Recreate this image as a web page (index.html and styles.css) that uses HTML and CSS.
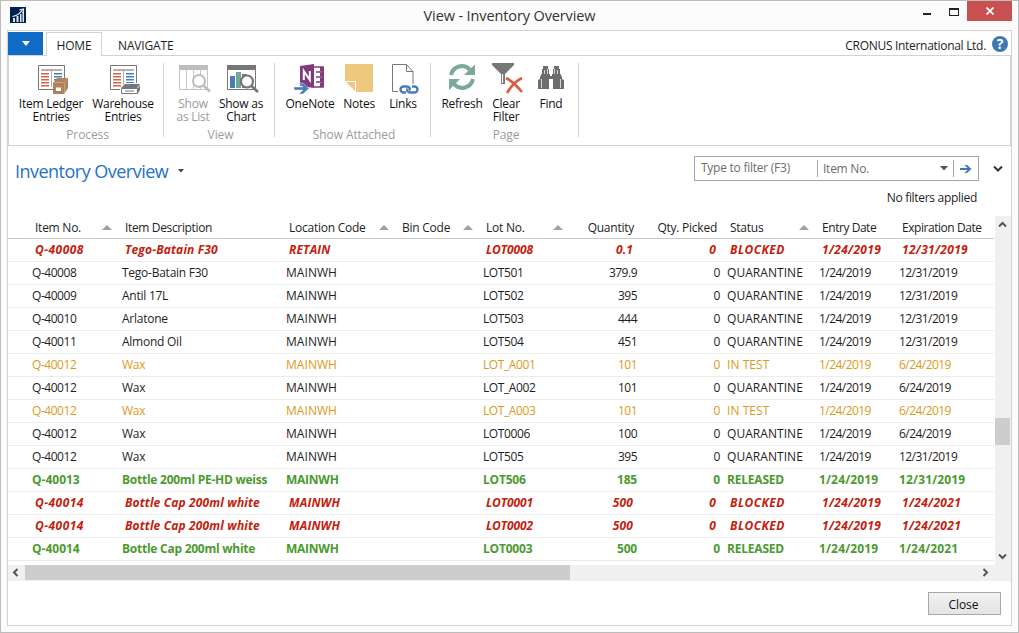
FILE: index.html
```html
<!DOCTYPE html>
<html lang="en">
<head>
<meta charset="utf-8">
<title>View - Inventory Overview</title>
<link rel="stylesheet" href="styles.css">
</head>
<body>
<div class="window">
  <header class="titlebar">
    <svg class="app-icon" width="16" height="16" viewBox="0 0 16 16"><rect width="16" height="16" fill="#00214f"/><path d="M3 11h2v4H3zM6.500 9h2v6h-2zM10 7h1.500v8H10zM12.500 5H14v10h-1.500z" fill="#dfe6ef"/><path d="M2.500 9.500C6 9 9.500 7 12 3.500M9.500 3l4-1-.5 4" fill="none" stroke="#fff" stroke-width="1.200"/></svg>
    <h1 class="window-title">View - Inventory Overview</h1>
    <div class="window-buttons">
      <svg class="minimize" width="8" height="3"><rect width="8" height="2" fill="#222"/></svg>
      <svg class="maximize" width="10" height="8"><path d="M0 0h10v8H0zM1 2v5h8V2z" fill="#222" fill-rule="evenodd"/></svg>
      <div class="window-close"><svg width="8" height="8" viewBox="0 0 8 8"><path d="M.5.5l7 7M7.500.5l-7 7" stroke="#fff" stroke-width="1.700"/></svg></div>
    </div>
  </header>
  <main class="panel">
    <nav class="tabs">
      <div class="app-menu"><svg width="8" height="5"><path d="M0 0h8L4 5z" fill="#fff"/></svg></div>
      <div class="tab tab-active">HOME</div>
      <div class="tab">NAVIGATE</div>
      <div class="company">CRONUS International Ltd.</div>
      <div class="help">?</div>
    </nav>
    <section class="ribbon">
      <div class="group group-process">
        <div class="actions">
          <div class="action"><svg class="icon" viewBox="0 0 32 32"><use href="#report"/><path d="M18 21l4-5h11v10l-4 6H18z" fill="#b18159"/><path d="M18 20.500h11l4-4M29.500 21v11" fill="none" stroke="#d7b898" stroke-width=".6"/><path d="M21 25.500h5v3.500h-5z" fill="#fff"/></svg><span>Item Ledger<br>Entries</span></div>
          <div class="action"><svg class="icon" viewBox="0 0 32 32"><use href="#report"/><path d="M13 27l5-6h16v7l-3 5H13z" fill="#fff"/><path d="M14 26l4-4h15l-3 4zM30.500 26.500l2.500-3.500v5l-2.500 4z" fill="#777"/><path d="M14.500 26.500h16v5h-16zM18 29h9" fill="none" stroke="#777"/></svg><span>Warehouse<br>Entries</span></div>
        </div>
        <div class="group-label">Process</div>
      </div>
      <div class="group group-view">
        <div class="actions">
          <div class="action disabled"><svg class="icon" viewBox="0 0 32 32"><path d="M2 3h29v5H2z" fill="#bdbdbd"/><path d="M2.500 7v20.500h28V7M9.500 8v19M16.500 8v19M23.500 8v19" fill="none" stroke="#c6c6c6"/><circle cx="22" cy="19" r="6" fill="#fff" stroke="#bdbdbd" stroke-width="2"/><path d="M26.500 23.500l6.500 6" stroke="#bdbdbd" stroke-width="2.500"/></svg><span>Show<br>as List</span></div>
          <div class="action"><svg class="icon" viewBox="0 0 32 32"><path d="M2 3h29v5H2z" fill="#777"/><path d="M2.500 7v20.500h28V7" fill="none" stroke="#777"/><path d="M5 14h5v12H5z" fill="#477eb8"/><path d="M11 10h5v16h-5z" fill="#72a796"/><path d="M17 12h5v14h-5z" fill="#777"/><circle cx="22" cy="19.500" r="6" fill="#fff" stroke="#777" stroke-width="2.200"/><path d="M26.500 24l6.500 6" stroke="#777" stroke-width="2.800"/></svg><span>Show as<br>Chart</span></div>
        </div>
        <div class="group-label">View</div>
      </div>
      <div class="group group-attached">
        <div class="actions">
          <div class="action"><svg class="icon" viewBox="0 0 32 32"><path d="M6 4l14-2v24L6 24z" fill="#80397b"/><path d="M20 5h9v20h-9M22 10h8M22 15h8M22 20h8" fill="none" stroke="#80397b" stroke-width="1.600"/><path d="M26 5h4v4h-4zM26 10.500h4v4h-4zM26 16h4v4h-4zM26 21h4v4h-4z" fill="#80397b"/><path d="M9.800 18V9l6 9V9" fill="none" stroke="#fff" stroke-width="2"/><path d="M0 25h9l-4-4h4l6 5.500L9 32H5l4-4H0z" fill="#477eb8" stroke="#fff" stroke-width=".4"/></svg><span>OneNote</span></div>
          <div class="action"><svg class="icon" viewBox="0 0 32 32"><path d="M2 2h28v28H13L2 19z" fill="#eec77e"/><path d="M2 19.500h10.500V30" fill="none" stroke="#fff"/></svg><span>Notes</span></div>
          <div class="action"><svg class="icon" viewBox="0 0 32 32"><path d="M11 29.500H5.500v-27h14l6.500 7V22M19.500 2.500v7H26" fill="none" stroke="#777"/><g fill="none" stroke="#fff" stroke-width="5"><rect x="13.500" y="24.500" width="9" height="6" rx="3"/><rect x="21.500" y="24.500" width="9" height="6" rx="3"/></g><g fill="none" stroke="#477eb8" stroke-width="2.400"><path d="M19 30.500h-2.500a3 3 0 0 1 0-6h3c3 0 4 2 3 4"/><path d="M25 24.500h2.500a3 3 0 0 1 0 6h-4c-3 0-4-2-3-4"/></g></svg><span>Links</span></div>
        </div>
        <div class="group-label">Show Attached</div>
      </div>
      <div class="group group-page">
        <div class="actions">
          <div class="action"><svg class="icon" viewBox="0 0 32 32"><g fill="none" stroke="#7aa999" stroke-width="4"><path d="M5 13c2-9 13-12 19-5"/><path d="M27 17c-2 9-13 12-19 5"/></g><path d="M29 2.500V13H18l4-4zM3 28V17h11l-4 4z" fill="#7aa999"/></svg><span>Refresh</span></div>
          <div class="action"><svg class="icon" viewBox="0 0 32 32"><path d="M2 1h22v2l-9 9v10h-4V12L2 3z" fill="#777"/><path d="M12.500 12v9" stroke="#fff" stroke-width="1.200"/><path d="M16 16c6 3 11 8 16 14M32 16c-6 3-11 8-15 15" fill="none" stroke="#d95f43" stroke-width="2.600"/></svg><span>Clear<br>Filter</span></div>
          <div class="action"><svg class="icon" viewBox="0 0 32 32"><path d="M8 4h5v3h1v5h1v2h2v-2h1V7h1V4h5v3h1v4l2 4v2l2 1v9H18V17h-4v10H3v-9l2-1v-2l2-4V7h1z" fill="#6d6d6d"/><path d="M6.500 17v9M25.500 17v9M9.500 8v4M22.500 8v4M12.500 7v5M19.500 7v5" stroke="#fff" stroke-width=".7"/></svg><span>Find</span></div>
        </div>
        <div class="group-label">Page</div>
      </div>
    </section>
    <section class="page-head">
      <h2 class="page-title">Inventory Overview</h2>
      <svg class="title-arrow" width="6" height="4"><path d="M0 0h6L3 3.500z" fill="#444"/></svg>
      <div class="filter">
        <div class="filter-text">Type to filter (F3)</div>
        <div class="filter-field"><span>Item No.</span><svg width="8" height="5"><path d="M0 0h8L4 4.500z" fill="#555"/></svg></div>
        <div class="filter-go"><svg width="12" height="10" viewBox="0 0 12 10"><path d="M0 4h7.500L4.500 1H7l4.500 4L7 9H4.500l3-3H0z" fill="#3f78b4"/></svg></div>
      </div>
      <svg class="expand" width="10" height="8" viewBox="0 0 10 8"><path d="M1 1.500l4 4 4-4" fill="none" stroke="#333" stroke-width="2"/></svg>
    </section>
    <div class="filter-status">No filters applied</div>
    <section class="list">
      <table class="grid">
        <colgroup><col class="c-item"><col class="c-desc"><col class="c-loc"><col class="c-bin"><col class="c-lot"><col class="c-qty"><col class="c-picked"><col class="c-status"><col class="c-entry"><col class="c-exp"></colgroup>
        <thead><tr><th class="sorted first">Item No.</th><th>Item Description</th><th class="sorted">Location Code</th><th class="sorted">Bin Code</th><th class="sorted">Lot No.</th><th class="num">Quantity</th><th class="num">Qty. Picked</th><th class="sorted">Status</th><th class="date-head">Entry Date</th><th class="date-head">Expiration Date</th></tr></thead>
        <tbody>
          <tr class="blocked"><td>Q-40008</td><td>Tego-Batain F30</td><td>RETAIN</td><td></td><td>LOT0008</td><td>0.1</td><td>0</td><td>BLOCKED</td><td>1/24/2019</td><td>12/31/2019</td></tr>
          <tr><td>Q-40008</td><td>Tego-Batain F30</td><td>MAINWH</td><td></td><td>LOT501</td><td>379.9</td><td>0</td><td>QUARANTINE</td><td>1/24/2019</td><td>12/31/2019</td></tr>
          <tr><td>Q-40009</td><td>Antil 17L</td><td>MAINWH</td><td></td><td>LOT502</td><td>395</td><td>0</td><td>QUARANTINE</td><td>1/24/2019</td><td>12/31/2019</td></tr>
          <tr><td>Q-40010</td><td>Arlatone</td><td>MAINWH</td><td></td><td>LOT503</td><td>444</td><td>0</td><td>QUARANTINE</td><td>1/24/2019</td><td>12/31/2019</td></tr>
          <tr><td>Q-40011</td><td>Almond Oil</td><td>MAINWH</td><td></td><td>LOT504</td><td>451</td><td>0</td><td>QUARANTINE</td><td>1/24/2019</td><td>12/31/2019</td></tr>
          <tr class="testing"><td>Q-40012</td><td>Wax</td><td>MAINWH</td><td></td><td>LOT_A001</td><td>101</td><td>0</td><td>IN TEST</td><td>1/24/2019</td><td>6/24/2019</td></tr>
          <tr><td>Q-40012</td><td>Wax</td><td>MAINWH</td><td></td><td>LOT_A002</td><td>101</td><td>0</td><td>QUARANTINE</td><td>1/24/2019</td><td>6/24/2019</td></tr>
          <tr class="testing"><td>Q-40012</td><td>Wax</td><td>MAINWH</td><td></td><td>LOT_A003</td><td>101</td><td>0</td><td>IN TEST</td><td>1/24/2019</td><td>6/24/2019</td></tr>
          <tr><td>Q-40012</td><td>Wax</td><td>MAINWH</td><td></td><td>LOT0006</td><td>100</td><td>0</td><td>QUARANTINE</td><td>1/24/2019</td><td>6/24/2019</td></tr>
          <tr><td>Q-40012</td><td>Wax</td><td>MAINWH</td><td></td><td>LOT505</td><td>395</td><td>0</td><td>QUARANTINE</td><td>1/24/2019</td><td>12/31/2019</td></tr>
          <tr class="released"><td>Q-40013</td><td>Bottle 200ml PE-HD weiss</td><td>MAINWH</td><td></td><td>LOT506</td><td>185</td><td>0</td><td>RELEASED</td><td>1/24/2019</td><td>12/31/2019</td></tr>
          <tr class="blocked"><td>Q-40014</td><td>Bottle Cap 200ml white</td><td>MAINWH</td><td></td><td>LOT0001</td><td>500</td><td>0</td><td>BLOCKED</td><td>1/24/2019</td><td>1/24/2021</td></tr>
          <tr class="blocked"><td>Q-40014</td><td>Bottle Cap 200ml white</td><td>MAINWH</td><td></td><td>LOT0002</td><td>500</td><td>0</td><td>BLOCKED</td><td>1/24/2019</td><td>1/24/2021</td></tr>
          <tr class="released"><td>Q-40014</td><td>Bottle Cap 200ml white</td><td>MAINWH</td><td></td><td>LOT0003</td><td>500</td><td>0</td><td>RELEASED</td><td>1/24/2019</td><td>1/24/2021</td></tr>
        </tbody>
      </table>
      <div class="vscroll">
        <svg width="9" height="7" viewBox="0 0 9 7"><path d="M1 5.500L4.500 2 8 5.500" fill="none" stroke="#555" stroke-width="2"/></svg>
        <div class="vthumb"></div>
        <svg class="vdown" width="9" height="7" viewBox="0 0 9 7"><path d="M1 1.500L4.500 5 8 1.500" fill="none" stroke="#555" stroke-width="2"/></svg>
      </div>
    </section>
    <div class="hscroll">
      <svg width="7" height="9" viewBox="0 0 7 9"><path d="M5.500 1L2 4.500 5.500 8" fill="none" stroke="#555" stroke-width="2"/></svg>
      <div class="hthumb"></div>
      <svg class="hright" width="7" height="9" viewBox="0 0 7 9"><path d="M1.500 1L5 4.500 1.500 8" fill="none" stroke="#555" stroke-width="2"/></svg>
    </div>
    <footer class="footer"><button class="close-button">Close</button></footer>
  </main>
</div>
<svg class="defs" width="0" height="0"><defs>
  <g id="report"><path d="M3.500 3.500h26v24h-26z" fill="#fff" stroke="#777"/><path d="M6 7h21v2H6z" fill="#b5afb1"/><path d="M16 9h1v16h-1z" fill="#b5afb1"/><path d="M6 11.700h8M6 14.700h8M6 17.700h8M6 20.700h8M6 23.700h8" stroke="#d6644d" stroke-width="1.500"/><path d="M19 11.700h8M19 14.700h8M19 17.700h8M19 20.700h8M19 23.700h8" stroke="#477eb8" stroke-width="1.500"/></g>
</defs></svg>
</body>
</html>
```
FILE: styles.css
```css
* { box-sizing: border-box; }
body {
  margin: 0;
  font-family: "Open Sans", "Noto Sans", sans-serif;
  font-size: 12px;
  letter-spacing: -0.25px;
  color: #1e1e1e;
}
svg { display: block; flex: none; }
.defs { position: absolute; }
.window {
  width: 1019px;
  height: 633px;
  border: 1px solid #bcbcbc;
  background: #fbfbfb;
  padding: 0 6px 6px;
  display: flex;
  flex-direction: column;
  overflow: hidden;
}
.titlebar {
  height: 29px;
  flex: none;
  display: grid;
  grid-template-columns: 1fr auto 1fr;
  align-items: start;
}
.app-icon { margin: 6px 0 0 3px; }
.window-title {
  margin: 5px 0 0;
  font-size: 14.5px;
  letter-spacing: -0.12px;
  line-height: 20px;
  font-weight: 400;
  color: #333;
}
.window-buttons { display: flex; justify-content: flex-end; }
.minimize { margin: 12px 18px 0 0; }
.maximize { margin: 7px 8px 0 0; }
.window-close {
  width: 45px;
  height: 20px;
  background: #c75050;
  display: flex;
  align-items: center;
  justify-content: center;
}
.panel {
  width: 1005px;
  height: 596px;
  border: 1px solid #d2d2d2;
  background: #fff;
  display: flex;
  flex-direction: column;
}
.tabs {
  height: 24px;
  flex: none;
  display: flex;
  padding-top: 1px;
}
.app-menu {
  width: 35px;
  background: #0f6cc6;
  display: flex;
  align-items: center;
  justify-content: center;
  margin-right: 3px;
}
.tab { line-height: 28px; padding: 0 16px; height: 24px; letter-spacing: -0.15px; }
.tab-active {
  width: 56px;
  padding: 0;
  text-align: center;
  line-height: 26px;
  border: 1px solid #d2d2d2;
  border-bottom: 0;
  background: #fff;
  position: relative;
}
.company { margin-left: auto; line-height: 28px; letter-spacing: -0.3px; }
.help {
  width: 16px;
  height: 16px;
  border-radius: 50%;
  background: #3f78b4;
  color: #fff;
  font-weight: 700;
  font-size: 14px;
  line-height: 16px;
  text-align: center;
  letter-spacing: 0;
  margin: 4px 3px 0 6px;
}
.ribbon {
  height: 91px;
  flex: none;
  border: 1px solid #d2d2d2;
  display: flex;
  padding: 7px 0 8px;
}
.group {
  border-right: 1px solid #d2d2d2;
  display: flex;
  flex-direction: column;
}
.actions { display: flex; flex: 1; margin-top: -1px; }
.action { text-align: center; line-height: 13px; color: #111; }
.action span { display: block; margin-top: 3px; white-space: nowrap; }
.action.disabled, .group-label { color: #9b9b9b; }
.icon { width: 32px; height: 32px; margin: 0 auto; overflow: visible; }
.group-label {
  text-align: center;
  line-height: 14px;
  margin-bottom: -5px;
  padding-left: 3px;
  letter-spacing: -0.1px;
}
.group-process { width: 155px; }
.group-process .actions { padding-left: 6px; }
.group-process .action { width: 72px; }
.group-view { width: 111px; }
.group-view .actions { padding-left: 5px; }
.group-view .action { width: 48px; }
.group-attached { width: 156px; }
.group-attached .actions { padding-left: 9px; }
.group-attached .action { width: 52px; }
.group-attached .action:nth-child(2) { width: 46px; }
.group-attached .action:nth-child(3) { width: 42px; }
.group-page { width: 148px; }
.group-page .actions { padding-left: 8px; }
.group-page .action { width: 46px; }
.group-page .action:nth-child(2) { width: 42px; }
.group-page .action:nth-child(3) { width: 48px; }
.page-head {
  flex: none;
  height: 36px;
  padding: 10px 8px 0 7px;
  display: flex;
}
.page-title {
  margin: 2px 0 0;
  font-weight: 400;
  font-size: 18px;
  letter-spacing: -0.52px;
  line-height: 26px;
  color: #1e72c8;
}
.title-arrow { margin: 13px 0 0 10px; }
.filter {
  width: 285px;
  height: 25px;
  margin-left: auto;
  border: 1px solid #a5a5a5;
  display: flex;
  padding: 3px 0;
  color: #6d6d6d;
}
.filter-text { width: 122px; padding-left: 6px; line-height: 16px; }
.filter-field {
  width: 137px;
  border-left: 1px solid #a5a5a5;
  border-right: 1px solid #a5a5a5;
  display: flex;
  align-items: center;
  justify-content: space-between;
  padding: 0 5px;
}
.filter-go { flex: 1; display: flex; align-items: center; justify-content: center; }
.expand { margin: 9px 0 0 14px; }
.filter-status {
  height: 34px;
  padding: 7px 34px 0 0;
  line-height: 18px;
  text-align: right;
  letter-spacing: -0.3px;
}
.list { display: flex; height: 349px; flex: none; }
.grid {
  width: 986px;
  height: 345px;
  table-layout: fixed;
  border-collapse: separate;
  border-spacing: 0;
}
.c-item { width: 111px; }
.c-desc { width: 164px; }
.c-loc { width: 113px; }
.c-bin { width: 84px; }
.c-lot { width: 90px; }
.c-qty { width: 70px; }
.c-picked { width: 84px; }
.c-status { width: 92px; }
.c-entry { width: 80px; }
.c-exp { width: 98px; }
th, td { text-align: left; white-space: nowrap; height: 23px; line-height: 20px; }
th { font-weight: 400; padding: 2px 6px 0; border-bottom: 1px solid #c9c9c9; }
td { border-bottom: 1px solid #ececec; padding: 1px 3px; }
th:first-child { padding-left: 27px; }
td:first-child { padding-left: 24px; letter-spacing: -0.45px; }
th:nth-child(2) { letter-spacing: -0.35px; }
td:nth-child(3), td:nth-child(8) { letter-spacing: 0.05px; }
td:nth-child(5) { letter-spacing: -0.4px; }
td:nth-child(6) { letter-spacing: -0.5px; }
td:nth-child(9), td:nth-child(10) { letter-spacing: -0.55px; }
.date-head { letter-spacing: -0.45px; }
.num, td:nth-child(6), td:nth-child(7) { text-align: right; }
th.num:nth-child(7), td:nth-child(7) { padding-right: 4px; }
th.num:nth-child(7) { padding-right: 7px; }
.sorted::after {
  content: "";
  float: right;
  margin: 7px 1px 0 0;
  border: 5px solid transparent;
  border-top: 0;
  border-bottom-color: #a0a0a0;
}
.testing { color: #dc9a20; }
.released { color: #4c9a2f; font-weight: 700; }
.released td:first-child { letter-spacing: 0; }
.released td:nth-child(n+5) { letter-spacing: -0.2px; }
.released td:nth-child(n+9) { letter-spacing: 0.15px; }
.released td:nth-child(3) { letter-spacing: -0.25px; }
.blocked { color: #c3210d; font-weight: 700; font-style: italic; }
.blocked td { padding-left: 6px; padding-right: 7px; letter-spacing: 0.15px; }
.blocked td:first-child { padding-left: 27px; letter-spacing: 0.45px; }
.blocked td:nth-child(5) { letter-spacing: -0.1px; }
.blocked td:nth-child(7) { padding-right: 8px; }
.blocked td:nth-child(8) { letter-spacing: 0.45px; }
.blocked td:nth-child(n+9) { letter-spacing: 0.3px; }
.vscroll {
  width: 16px;
  margin-left: 1px;
  background: #f0f0f0;
  display: flex;
  flex-direction: column;
  align-items: center;
  padding: 5px 1px 5px 0;
}
.vthumb { width: 15px; height: 27px; background: #cdcdcd; margin-top: 190px; }
.vdown { margin-top: auto; }
.hscroll {
  height: 16px;
  flex: none;
  background: #f0f0f0;
  display: flex;
  align-items: center;
  padding: 0 22px 1px 4px;
}
.hthumb { width: 545px; height: 15px; background: #cdcdcd; margin-left: 6px; }
.hright { margin-left: auto; }
.footer { display: flex; justify-content: flex-end; padding: 11px 10px 0; }
.close-button {
  width: 73px;
  height: 23px;
  border: 1px solid #a8a8a8;
  background: linear-gradient(#f1f1f1, #e4e4e4);
  font: inherit;
  letter-spacing: -0.1px;
  color: #111;
  padding: 1px 2px 0 0;
}
```
